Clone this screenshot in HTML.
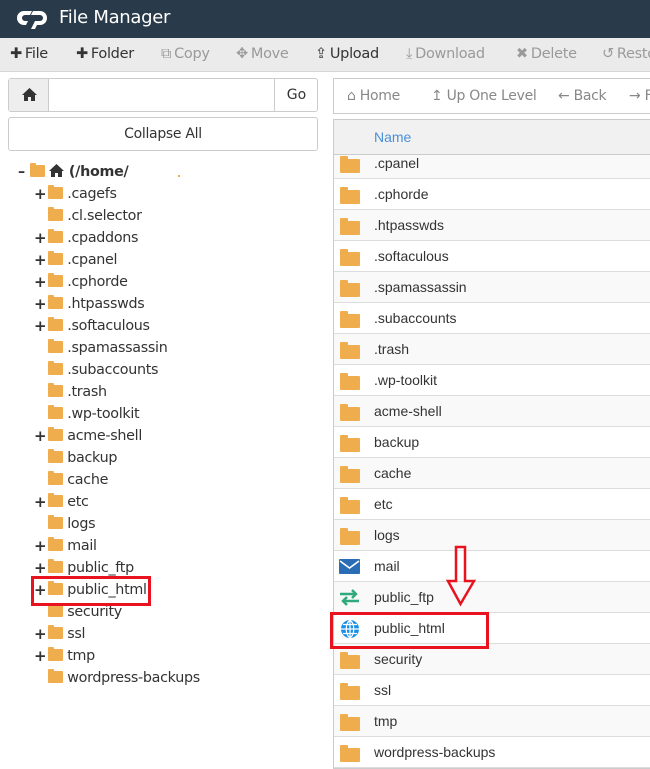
<!DOCTYPE html>
<html><head><meta charset="utf-8"><style>
*{box-sizing:border-box;margin:0;padding:0}
body{width:650px;height:766px;overflow:hidden;background:#fff;font-family:"Liberation Sans",sans-serif;position:relative;color:#333}
.a{position:absolute}
#hdr{left:0;top:0;width:650px;height:38px;background:#293a4a}
#hdr span{position:absolute;left:59px;top:7px;color:#fff;font-size:18px;font-family:"DejaVu Sans",sans-serif;font-weight:400;letter-spacing:-0.3px}
#tb{left:0;top:38px;width:650px;height:34px;background:#ebebeb;border-bottom:1px solid #d6d6d6}
.ti{position:absolute;top:8px;font-size:14.5px;font-family:"DejaVu Sans",sans-serif;color:#333;white-space:nowrap;letter-spacing:-0.3px}
.ti i{font-style:normal;margin-right:3px}
.ti.d{color:#9a9a9a}
.box{border:1px solid #ccc;border-radius:3px}
.tree{font-family:"DejaVu Sans",sans-serif;font-size:14.3px;color:#333;letter-spacing:-0.3px}
.tr{position:absolute;height:22px;line-height:22px;white-space:nowrap}
.fold{display:inline-block;width:15px;height:12px;background:#f0ad4e;border-radius:1px;position:relative;vertical-align:-1px}
.fold:before{content:"";position:absolute;left:0;top:-2px;width:6px;height:3px;background:#f0ad4e;border-radius:1px 1px 0 0}
.pl{position:absolute;font-weight:bold;font-size:15px}
.row{position:absolute;left:334px;width:316px;height:31px;border-bottom:1px solid #ddd;font-size:14px;color:#333}
.row .t{position:absolute;left:40px;top:7px}
.row .fold{position:absolute;left:6px;top:11px;width:20px;height:14px}
.row .fold:before{width:8px;height:4px;top:-3px}
.odd{background:#f9f9f9}
</style></head><body>
<div id="hdr" class="a">
<svg class="a" style="left:17px;top:8px" width="32" height="21" viewBox="0 0 32 21"><path d="M7 3h8l-2 4H8a3 3 0 0 0 0 6h3l-2 4H7A7 7 0 0 1 7 3z" fill="#fff"/><path d="M16 3h7a7 7 0 0 1 0 14h-3l-2 4h-4l4-8h5a3 3 0 0 0 0-6h-9z" fill="#fff"/></svg>
<span>File Manager</span></div>
<div id="tb" class="a">
<span class="ti" style="left:10px"><i style="font-weight:bold">✚</i>File</span>
<span class="ti" style="left:76px"><i style="font-weight:bold">✚</i>Folder</span>
<span class="ti d" style="left:161px"><i>⧉</i>Copy</span>
<span class="ti d" style="left:236px"><i>✥</i>Move</span>
<span class="ti" style="left:315px"><i>⇪</i>Upload</span>
<span class="ti d" style="left:406px"><i>⤓</i>Download</span>
<span class="ti d" style="left:516px"><i>✖</i>Delete</span>
<span class="ti d" style="left:602px"><i>↺</i>Restore</span>
</div>
<div class="a box" style="left:8px;top:78px;width:310px;height:34px;background:#fff">
<div class="a" style="left:0;top:0;width:40px;height:32px;background:#eee;border-right:1px solid #ccc"><svg class="a" style="left:13px;top:9px" width="15" height="13" viewBox="0 0 15 13"><path d="M7.5 0L0 7h2v6h4V9h3v4h4V7h2z" fill="#333"/></svg></div>
<div class="a" style="left:265px;top:0;width:44px;height:32px;border-left:1px solid #ccc;text-align:center;line-height:32px;font-size:14px;font-family:'DejaVu Sans',sans-serif">Go</div>
</div>
<div class="a box" style="left:8px;top:117px;width:310px;height:34px;text-align:center;line-height:32px;font-size:14px;font-family:'DejaVu Sans',sans-serif;letter-spacing:-0.3px">Collapse All</div>

<div class="tree">
<div class="tr" style="left:18px;top:161px;font-weight:bold"><span>–</span> <span class="fold"></span> <svg width="15" height="13" viewBox="0 0 15 13" style="vertical-align:-1px"><path d="M7.5 0L0 7h2v6h4V9h3v4h4V7h2z" fill="#333"/></svg> (/home/</div>
<div class="a" style="left:178px;top:175px;width:2px;height:2px;background:#f0ad4e"></div>
</div>
<div class="tree" id="lt"></div>
<div class="a" style="left:333px;top:78px;width:320px;height:36px;border:1px solid #ccc;font-family:'DejaVu Sans',sans-serif;font-size:14px;color:#888;letter-spacing:-0.3px;white-space:nowrap;overflow:hidden">
<span class="a" style="left:13px;top:9px">⌂ Home</span>
<span class="a" style="left:97px;top:9px">↥ Up One Level</span>
<span class="a" style="left:224px;top:9px">← Back</span>
<span class="a" style="left:295px;top:9px">→ F</span>
</div>
<div class="a" style="left:333px;top:119px;width:320px;height:650px;border:1px solid #ccc;overflow:hidden" id="rp"></div>
<div class="a" style="left:334px;top:120px;width:316px;height:35px;background:#f1f1f1;border-bottom:1px solid #ccc;z-index:2"><span class="a" style="left:40px;top:9px;color:#4a90d9;font-size:14px">Name</span></div>
<div id="rows"></div>
<div class="a" style="left:31px;top:576px;width:120px;height:30px;border:3px solid #e8131f"></div>
<div class="a" style="left:330px;top:612px;width:159px;height:37px;border:3px solid #e8131f;z-index:3"></div>
<svg class="a" style="left:446px;top:545px;z-index:3" width="30" height="62"><path d="M10 2h9v34h9L14.5 59 2 36h8z" fill="none" stroke="#e8131f" stroke-width="2.5"/></svg>
<script>
var L=[["+",".cagefs"],["",".cl.selector"],["+",".cpaddons"],["+",".cpanel"],["+",".cphorde"],["+",".htpasswds"],["+",".softaculous"],["",".spamassassin"],["",".subaccounts"],["",".trash"],["",".wp-toolkit"],["+","acme-shell"],["","backup"],["","cache"],["+","etc"],["","logs"],["+","mail"],["+","public_ftp"],["+","public_html"],["","security"],["+","ssl"],["+","tmp"],["","wordpress-backups"]];
var h="";L.forEach(function(r,i){var y=183+i*22;h+='<div class="pl" style="left:34px;top:'+(y)+'px;line-height:22px">'+r[0]+'</div><div class="tr" style="left:48px;top:'+y+'px"><span class="fold"></span> '+r[1]+'</div>';});
document.getElementById("lt").innerHTML=h;
var R=[".cpanel",".cphorde",".htpasswds",".softaculous",".spamassassin",".subaccounts",".trash",".wp-toolkit","acme-shell","backup","cache","etc","logs","mail","public_ftp","public_html","security","ssl","tmp","wordpress-backups"];
h="";R.forEach(function(n,i){var y=148+i*31;var ic='<span class="fold"></span>';
if(n=="mail")ic='<svg class="a" style="left:5px;top:8px" width="21" height="15"><rect width="21" height="15" rx="1" fill="#2a6db5"/><path d="M1 2l9.5 7L20 2" stroke="#fff" stroke-width="1.6" fill="none"/></svg>';
if(n=="public_ftp")ic='<svg class="a" style="left:5px;top:7px" width="21" height="17"><path d="M1 5h16M13 1l4 4-4 4M20 12H4M8 8l-4 4 4 4" stroke="#2eaa7c" stroke-width="2.5" fill="none"/></svg>';
if(n=="public_html")ic='<svg class="a" style="left:6px;top:6px" width="20" height="20" viewBox="0 0 20 20"><circle cx="10" cy="10" r="9" fill="#1a8fe6"/><path d="M1 10h18M10 1v18M3 5.5h14M3 14.5h14M10 1c-5 4-5 14 0 18M10 1c5 4 5 14 0 18" stroke="#fff" stroke-width="1.2" fill="none"/></svg>';
h+='<div class="row '+(i%2==0?'odd':'')+'" style="top:'+y+'px">'+ic+'<span class="t">'+n+'</span></div>';});
document.getElementById("rows").innerHTML=h;
</script>
</body></html>
